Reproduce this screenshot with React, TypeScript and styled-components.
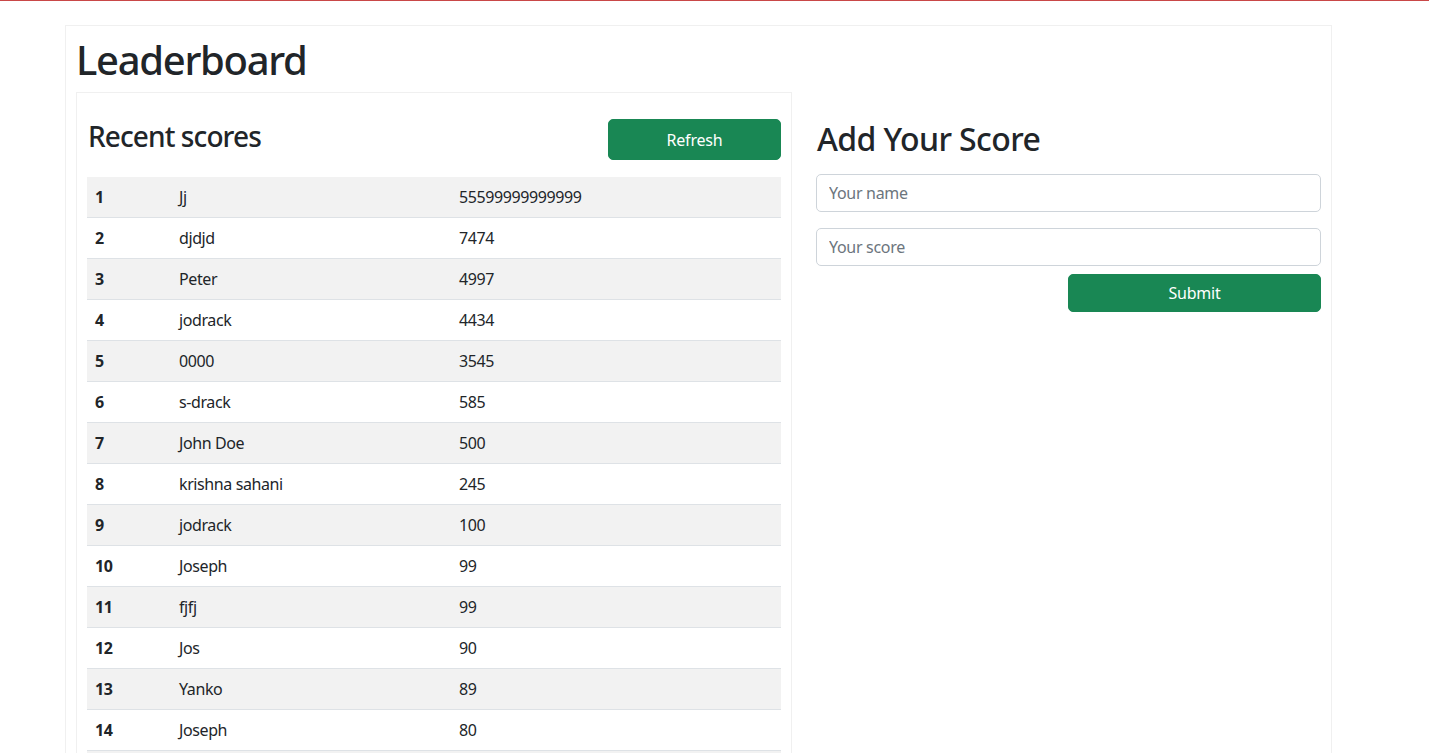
import React from "react";
import styled, { createGlobalStyle } from "styled-components";

const GlobalStyle = createGlobalStyle`
  * { box-sizing: border-box; }
  html, body { margin: 0; padding: 0; background: #fff; }
  body {
    font-family: "Noto Sans", "Open Sans", "DejaVu Sans", sans-serif;
    font-size: 16px;
    line-height: 1.5;
    color: #212529;
    border-top: 1px solid #c94848;
  }
`;

const Container = styled.main`
  margin: 24px 97px 0 65px;
  padding: 10px;
  border: 1px solid #f0f0f0;
  border-bottom: none;
`;

const Title = styled.h1`
  margin: 0 0 8px 0;
  font-size: 40px;
  font-weight: 500;
  line-height: 1.2;
  letter-spacing: -1.3px;
`;

const Columns = styled.div`
  display: grid;
  grid-template-columns: 716px 1fr;
  column-gap: 24px;
  align-items: start;
`;

const Card = styled.section`
  border: 1px solid #f0f0f0;
  border-bottom: none;
  padding: 10px 10px 0 10px;
`;

const CardHeader = styled.div`
  display: flex;
  justify-content: space-between;
  align-items: center;
  padding-top: 16px;
  margin-bottom: 17px;
`;

const SubTitle = styled.h3`
  margin: 0 0 5px 1px;
  font-size: 28px;
  font-weight: 500;
  line-height: 1.2;
  letter-spacing: -0.9px;
`;

const Button = styled.button<{ $width: number; $height: number }>`
  width: ${(p) => p.$width}px;
  height: ${(p) => p.$height}px;
  background: #198754;
  color: #fff;
  border: 1px solid #198754;
  border-radius: 5px;
  font-family: inherit;
  font-size: 16px;
  line-height: 1.5;
  padding: 6px 12px;
  letter-spacing: -0.2px;
  cursor: pointer;
`;

const Table = styled.div`
  width: 100%;
`;

const Row = styled.div<{ $striped: boolean }>`
  display: grid;
  grid-template-columns: 84px 280px 1fr;
  background: ${(p) => (p.$striped ? "#f2f2f2" : "#fff")};
  border-bottom: 1px solid #dee2e6;
`;

const Cell = styled.div<{ $bold?: boolean }>`
  padding: 8px;
  font-size: 16px;
  line-height: 24px;
  letter-spacing: -0.4px;
  font-weight: ${(p) => (p.$bold ? 700 : 400)};
  white-space: nowrap;
`;

const FormColumn = styled.section`
  padding-top: 28px;
`;

const FormTitle = styled.h2`
  margin: 0 0 16px 1px;
  font-size: 32px;
  font-weight: 500;
  line-height: 1.2;
  letter-spacing: -0.6px;
`;

const Form = styled.form`
  display: flex;
  flex-direction: column;
`;

const Input = styled.input<{ $gap: number }>`
  display: block;
  width: 100%;
  height: 38px;
  padding: 6px 12px;
  margin-bottom: ${(p) => p.$gap}px;
  font-family: inherit;
  font-size: 16px;
  line-height: 1.5;
  letter-spacing: -0.3px;
  color: #212529;
  background: #fff;
  border: 1px solid #ced4da;
  border-radius: 5px;
  &::placeholder { color: #6c757d; }
`;

const ButtonRow = styled.div`
  display: flex;
  justify-content: flex-end;
`;

const scores: [string, string][] = [
  ["Jj", "55599999999999"],
  ["djdjd", "7474"],
  ["Peter", "4997"],
  ["jodrack", "4434"],
  ["0000", "3545"],
  ["s-drack", "585"],
  ["John Doe", "500"],
  ["krishna sahani", "245"],
  ["jodrack", "100"],
  ["Joseph", "99"],
  ["fjfj", "99"],
  ["Jos", "90"],
  ["Yanko", "89"],
  ["Joseph", "80"],
  ["Peter", "75"],
];

export default function App() {
  return (
    <>
      <GlobalStyle />
      <Container>
        <Title>Leaderboard</Title>
        <Columns>
          <Card>
            <CardHeader>
              <SubTitle>Recent scores</SubTitle>
              <Button type="button" $width={173} $height={41}>
                Refresh
              </Button>
            </CardHeader>
            <Table>
              {scores.map(([name, score], i) => (
                <Row key={i} $striped={i % 2 === 0}>
                  <Cell $bold>{i + 1}</Cell>
                  <Cell>{name}</Cell>
                  <Cell>{score}</Cell>
                </Row>
              ))}
            </Table>
          </Card>
          <FormColumn>
            <FormTitle>Add Your Score</FormTitle>
            <Form onSubmit={(e) => e.preventDefault()}>
              <Input type="text" placeholder="Your name" $gap={16} />
              <Input type="number" placeholder="Your score" $gap={8} />
              <ButtonRow>
                <Button type="submit" $width={253} $height={38}>
                  Submit
                </Button>
              </ButtonRow>
            </Form>
          </FormColumn>
        </Columns>
      </Container>
    </>
  );
}
